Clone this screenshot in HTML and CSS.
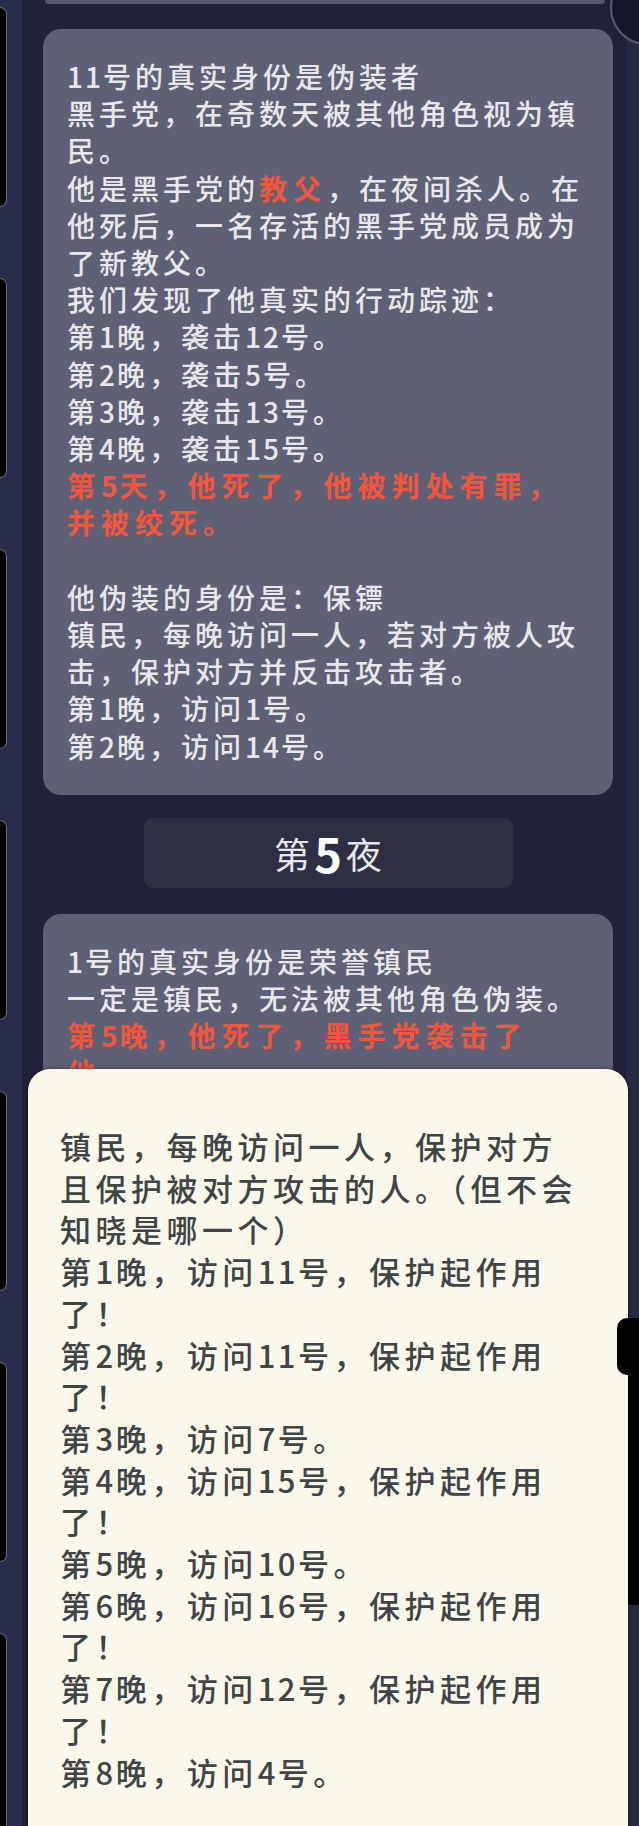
FILE: index.html
```html
<!DOCTYPE html>
<html lang="zh-CN">
<head>
<meta charset="utf-8">
<title>身份揭晓</title>
<link rel="stylesheet" href="styles.css">
</head>
<body>
<div class="screen">
  <aside class="rail">
    <div class="rail-tab"></div>
    <div class="rail-tab"></div>
    <div class="rail-tab"></div>
    <div class="rail-tab"></div>
    <div class="rail-tab"></div>
    <div class="rail-tab"></div>
    <div class="rail-tab"></div>
  </aside>

  <main class="feed">
    <div class="card-tail"></div>

    <section class="card">
      <p class="card-text"><i class="num">11</i>号的真实身份是伪装者<br>黑手党，在奇数天被其他角色视为镇<br>民。<br>他是黑手党的<span class="hl">教父</span>，在夜间杀人。在<br>他死后，一名存活的黑手党成员成为<br>了新教父。<br>我们发现了他真实的行动踪迹：<br>第<i class="num">1</i>晚，袭击<i class="num">12</i>号。<br>第<i class="num">2</i>晚，袭击<i class="num">5</i>号。<br>第<i class="num">3</i>晚，袭击<i class="num">13</i>号。<br>第<i class="num">4</i>晚，袭击<i class="num">15</i>号。<br><span class="hl">第<i class="num">5</i>天，他死了，他被判处有罪，<br>并被绞死。</span><br><br>他伪装的身份是：保镖<br>镇民，每晚访问一人，若对方被人攻<br>击，保护对方并反击攻击者。<br>第<i class="num">1</i>晚，访问<i class="num">1</i>号。<br>第<i class="num">2</i>晚，访问<i class="num">14</i>号。</p>
    </section>

    <h2 class="night"><span>第</span><b>5</b><span>夜</span></h2>

    <section class="card card-open">
      <p class="card-text"><i class="num">1</i>号的真实身份是荣誉镇民<br>一定是镇民，无法被其他角色伪装。<br><span class="hl">第<i class="num">5</i>晚，他死了，黑手党袭击了<br>他。</span></p>
    </section>
  </main>

  <div class="edge"></div>
</div>

<svg class="avatar-ring" width="30" height="48" viewBox="0 0 30 48" aria-hidden="true">
  <circle cx="38" cy="8" r="36" fill="#15162a" stroke="#5b5e73" stroke-width="2"/>
</svg>
<div class="side-handle"></div>
<div class="side-handle-tab"></div>

<div class="sheet">
  <p class="sheet-text">镇民，每晚访问一人，保护对方<br>且保护被对方攻击的人。（但不会<br>知晓是哪一个）<br>第<i class="num">1</i>晚，访问<i class="num">11</i>号，保护起作用<br>了！<br>第<i class="num">2</i>晚，访问<i class="num">11</i>号，保护起作用<br>了！<br>第<i class="num">3</i>晚，访问<i class="num">7</i>号。<br>第<i class="num">4</i>晚，访问<i class="num">15</i>号，保护起作用<br>了！<br>第<i class="num">5</i>晚，访问<i class="num">10</i>号。<br>第<i class="num">6</i>晚，访问<i class="num">16</i>号，保护起作用<br>了！<br>第<i class="num">7</i>晚，访问<i class="num">12</i>号，保护起作用<br>了！<br>第<i class="num">8</i>晚，访问<i class="num">4</i>号。</p>
</div>
</body>
</html>
```

FILE: styles.css
```css
* {
  box-sizing: border-box;
}

html,
body {
  margin: 0;
  padding: 0;
}

body {
  width: 639px;
  height: 1826px;
  overflow: hidden;
  position: relative;
  background: #282b48;
  font-family: "Noto Sans CJK SC", "Noto Sans", sans-serif;
}

.screen {
  display: flex;
  height: 1826px;
}

/* left column of stacked player tiles */
.rail {
  width: 22px;
  flex: none;
  display: flex;
  flex-direction: column;
  gap: 71px;
  padding-top: 7px;
  background: #292c4a;
  overflow: hidden;
}

.rail-tab {
  flex: none;
  width: 7px;
  height: 200px;
  background: #030304;
  border: 1px solid #6a6a70;
  border-left: none;
  border-radius: 0 7px 7px 0;
}

.feed {
  flex: 1;
  display: flex;
  flex-direction: column;
  padding: 0 13px 0 21px;
  background: #20223a;
}

.edge {
  width: 13px;
  flex: none;
  background: #262944;
}

.card-tail {
  height: 4px;
  margin: 0 8px 0 2px;
  background: #56596d;
  border-radius: 0 0 4px 4px;
}

.card {
  margin-top: 25px;
  padding: 29px 16px 30px 24px;
  background: #5e6175;
  border-radius: 18px;
}

.card-open {
  height: 200px;
}

.card-text {
  margin: 0;
  font-size: 28px;
  font-weight: 500;
  letter-spacing: 4px;
  line-height: 37.2px;
  color: #e8e8ec;
  white-space: nowrap;
}

/* digit runs sit tighter than the ideographs around them */
.num {
  font-style: normal;
  letter-spacing: 2px;
}

.hl {
  color: #f4553b;
  font-weight: 700;
  letter-spacing: 6px;
}

.night {
  align-self: center;
  width: 369px;
  height: 70px;
  margin: 23px 0 0;
  display: flex;
  align-items: center;
  justify-content: center;
  gap: 4px;
  background: #2e2f45;
  border-radius: 9px;
  font-size: 36px;
  font-weight: 400;
  line-height: 1;
  color: #e6e6ea;
}

.night b {
  font-size: 47px;
  font-weight: 700;
  color: #ffffff;
}

.night + .card {
  margin-top: 26px;
}

/* round avatar peeking in at the top right */
.avatar-ring {
  position: absolute;
  left: 609px;
  top: 0;
  display: block;
}

/* black handle on the right edge, partly behind the sheet */
.side-handle {
  position: absolute;
  left: 621px;
  top: 1318px;
  width: 18px;
  height: 287px;
  background: #020203;
  border-radius: 10px 0 0 10px;
}

.side-handle-tab {
  position: absolute;
  left: 617px;
  top: 1318px;
  width: 22px;
  height: 57px;
  background: #020203;
  border-radius: 10px 0 0 10px;
  z-index: 3;
}

/* cream detail sheet sliding over the feed */
.sheet {
  position: absolute;
  left: 28px;
  top: 1069px;
  width: 600px;
  height: 757px;
  padding: 56px 16px 0 32px;
  background: #faf8ea;
  border-radius: 22px 22px 0 0;
  box-shadow: 0 0 5px rgba(0, 0, 0, 0.45);
  z-index: 2;
}

.sheet-text {
  margin: 0;
  font-size: 31px;
  font-weight: 500;
  letter-spacing: 4.5px;
  line-height: 41.7px;
  color: #3f4446;
  white-space: nowrap;
}

.sheet-text .num {
  letter-spacing: 2.5px;
}
```
